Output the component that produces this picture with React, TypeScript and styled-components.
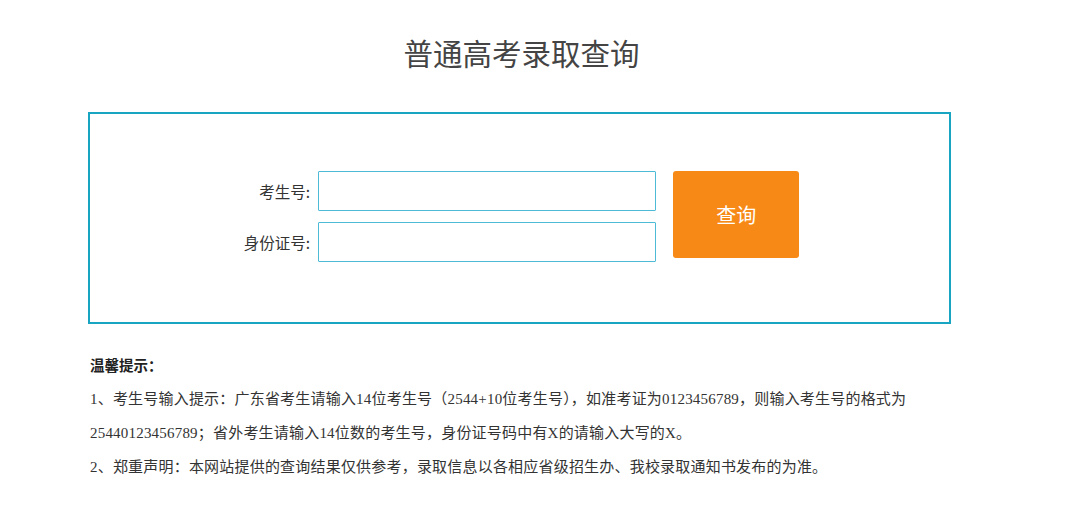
import React from "react";
import styled, { createGlobalStyle } from "styled-components";

const Global = createGlobalStyle`
  html, body { margin: 0; padding: 0; background: #fff; }
  body { font-family: "Noto Sans CJK SC", "Noto Sans", sans-serif; color: #333; }
  * { box-sizing: border-box; }
`;

const Page = styled.div`
  width: 863px;
  margin-left: 88px;
  padding-top: 32px;
`;

const Title = styled.h1`
  margin: 0 0 40px;
  font-size: 29.5px;
  line-height: 40px;
  font-weight: 400;
  color: #444;
  text-align: center;
  padding-left: 4px;
`;

const Panel = styled.div`
  height: 212px;
  border: 2px solid #17a5c1;
  padding-top: 57px;
  padding-left: 4px;
  display: flex;
  justify-content: center;
  align-items: flex-start;
`;

const Fields = styled.div`
  display: grid;
  grid-template-columns: auto 338px;
  column-gap: 8px;
  row-gap: 11px;
  align-items: center;
`;

const Label = styled.label`
  font-size: 15.5px;
  color: #333;
  text-align: right;
  line-height: 40px;
`;

const Input = styled.input`
  width: 338px;
  height: 40px;
  border: 1px solid #4dbbd6;
  border-radius: 1px;
  outline: none;
  padding: 0 8px;
  font-size: 14px;
  background: #fff;
`;

const QueryButton = styled.button`
  margin-left: 17px;
  width: 126px;
  height: 87px;
  border: none;
  border-radius: 3px;
  background: #f78a16;
  color: #fff;
  font-family: "Noto Sans CJK SC", sans-serif;
  font-size: 20px;
  cursor: pointer;
`;

const Tips = styled.div`
  margin-top: 24px;
  padding-left: 2px;
  font-family: "Liberation Serif", "Noto Sans CJK SC", serif;
  font-size: 15px;
  line-height: 34px;
  letter-spacing: 0.2px;
  color: #333;
`;

const TipsHead = styled.div`
  font-family: "Noto Sans CJK SC", sans-serif;
  font-weight: 700;
  font-size: 14.5px;
  color: #222;
  letter-spacing: 0;
`;

const TipLine = styled.p`
  margin: 0;
`;

export default function App() {
  return (
    <>
      <Global />
      <Page>
        <Title>普通高考录取查询</Title>
        <Panel>
          <Fields>
            <Label>考生号:</Label>
            <Input type="text" />
            <Label>身份证号:</Label>
            <Input type="text" />
          </Fields>
          <QueryButton>查询</QueryButton>
        </Panel>
        <Tips>
          <TipsHead>温馨提示：</TipsHead>
          <TipLine>
            1、考生号输入提示：广东省考生请输入14位考生号（2544+10位考生号），如准考证为0123456789，则输入考生号的格式为25440123456789；省外考生请输入14位数的考生号，身份证号码中有X的请输入大写的X。
          </TipLine>
          <TipLine>
            2、郑重声明：本网站提供的查询结果仅供参考，录取信息以各相应省级招生办、我校录取通知书发布的为准。
          </TipLine>
        </Tips>
      </Page>
    </>
  );
}
